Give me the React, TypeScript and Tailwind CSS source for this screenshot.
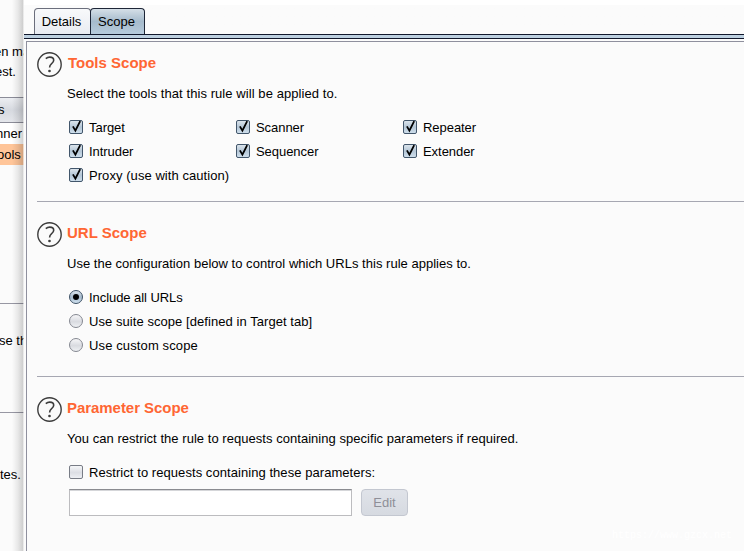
import { ReactNode } from 'react';

const TOOLS = [
  ['Target', 'Scanner', 'Repeater'],
  ['Intruder', 'Sequencer', 'Extender'],
];

function HelpIcon() {
  return (
    <svg viewBox="0 0 26 26" className="h-[26px] w-[26px] shrink-0" fill="none">
      <circle cx="12.5" cy="12.5" r="11.7" stroke="#3c3c3c" strokeWidth="1.4" />
      <path
        d="M8.8 6.700C9.900 5.700 11.300 5.100 12.800 5.100c2.400 0 3.900 1.200 3.900 3.200 0 1.800-1.100 2.700-2.300 3.600-1.200.9-1.800 1.700-1.800 3.700"
        stroke="#3c3c3c"
        strokeWidth="1.600"
      />
      <circle cx="12.5" cy="19" r="1.350" fill="#3c3c3c" />
    </svg>
  );
}

function CheckBox({ checked = false }: { checked?: boolean }) {
  return (
    <svg viewBox="0 0 16 16" className="mb-0.5 h-4 w-4 shrink-0">
      <defs>
        <linearGradient id="boxOn" x1="0" y1="0" x2="0" y2="1">
          <stop offset="0" stopColor="#dfe7ee" />
          <stop offset="0.5" stopColor="#b4c6d6" />
          <stop offset="1" stopColor="#d0e0ed" />
        </linearGradient>
        <linearGradient id="boxOff" x1="0" y1="0" x2="0" y2="1">
          <stop offset="0" stopColor="#f7f8fa" />
          <stop offset="0.55" stopColor="#dcdee4" />
          <stop offset="1" stopColor="#eff1f5" />
        </linearGradient>
      </defs>
      <rect
        x="1.5"
        y="1.5"
        width="13"
        height="13"
        rx="1.5"
        fill={checked ? 'url(#boxOn)' : 'url(#boxOff)'}
        stroke={checked ? '#42566b' : '#787c86'}
      />
      {checked && <path d="M4.9 7.400l2.500 4.200 4.800-9.500" stroke="#000" strokeWidth="1.800" fill="none" />}
    </svg>
  );
}

function RadioButton({ checked = false }: { checked?: boolean }) {
  return (
    <svg viewBox="0 0 16 16" className="mb-0.5 h-4 w-4 shrink-0">
      <defs>
        <linearGradient id="radioOn" x1="0" y1="0" x2="0" y2="1">
          <stop offset="0" stopColor="#e1e9f0" />
          <stop offset="0.5" stopColor="#a5b9cb" />
          <stop offset="1" stopColor="#d3e5f3" />
        </linearGradient>
        <linearGradient id="radioOff" x1="0" y1="0" x2="0" y2="1">
          <stop offset="0" stopColor="#f8f8fa" />
          <stop offset="0.55" stopColor="#d9dbe0" />
          <stop offset="1" stopColor="#f1f3f6" />
        </linearGradient>
      </defs>
      <circle
        cx="8"
        cy="8"
        r="6.5"
        fill={checked ? 'url(#radioOn)' : 'url(#radioOff)'}
        stroke={checked ? '#3f5266' : '#858891'}
      />
      {checked && <circle cx="8" cy="8" r="3" fill="#000" />}
    </svg>
  );
}

interface OptionProps {
  control: ReactNode;
  label: string;
  className?: string;
}

function Option({ control, label, className = '' }: OptionProps) {
  return (
    <label className="flex h-6 items-center gap-[5px]">
      {control}
      <span className={className}>{label}</span>
    </label>
  );
}

interface SectionProps {
  title: string;
  text: string;
  titleClass?: string;
  textClass?: string;
  children: ReactNode;
}

function Section({ title, text, titleClass = '', textClass = '', children }: SectionProps) {
  return (
    <section className="flex">
      <HelpIcon />
      <div className="ml-1 flex flex-col">
        <h2 className={`h-[22px] text-[15px] font-bold leading-[22px] text-[#ff6633] ${titleClass}`}>{title}</h2>
        <p className={`mt-2.5 h-5 leading-5 ${textClass}`}>{text}</p>
        <div className="mt-3 ml-px">{children}</div>
      </div>
    </section>
  );
}

// Strip of the parent window that stays visible behind the dialog
function BackgroundWindow() {
  return (
    <aside className="relative flex w-6 shrink-0 flex-col overflow-hidden whitespace-nowrap bg-[#fbfbfb]">
      <p className="mt-[42px] -ml-[6px] h-5 leading-5">en match</p>
      <p className="-ml-[5px] h-5 leading-5">est.</p>
      <div className="mt-[15px] flex h-[26px] items-center border-y border-[#8b8c98] bg-linear-to-b from-[#eceef2] via-[#d6d9df] to-[#e4e6eb]">
        <span className="-ml-[2px]">s</span>
      </div>
      <div className="h-[21px] bg-white leading-[21px]">
        <span className="-ml-[4px]">nner</span>
      </div>
      <div className="h-[21px] bg-[#ffc599] leading-[21px]">
        <span className="-ml-[3px]">ools</span>
      </div>
      <div className="mt-[138px] h-px shrink-0 bg-[#9797a3]" />
      <p className="mt-[27px] -ml-px h-5 leading-5">se this</p>
      <div className="mt-[61px] h-px shrink-0 bg-[#9797a3]" />
      <p className="mt-[52px] h-5 leading-5">tes.</p>
      <div className="absolute inset-y-0 right-0 w-3 bg-linear-to-r from-black/0 via-black/8 to-black/20" />
      <div className="absolute inset-y-0 right-0 w-px bg-white/60" />
    </aside>
  );
}

export default function App() {
  return (
    <div className="flex h-[551px] w-[744px] overflow-hidden bg-white font-['Liberation_Sans',Arial,sans-serif] text-[13px] text-black">
      <BackgroundWindow />
      <main className="flex grow flex-col bg-[#fbfbfb]">
        <div className="flex h-[34px] items-end bg-linear-to-b from-white from-15% to-[#fbfbfb] to-15% pl-2.5">
          <div className="flex h-[26px] w-[57px] items-center justify-center rounded-t-[4px] border border-b-0 border-[#6b6e7c] bg-linear-to-b from-[#f8f9fb] to-[#e9ecf2] pr-0.5">
            Details
          </div>
          <div className="-ml-px flex h-[26px] w-[55px] items-center justify-center rounded-t-[4px] border border-b-0 border-[#1d2536] bg-linear-to-b from-[#d5dfe7] via-[#a6bbcc] to-[#b7cbdc] pr-0.5">
            Scope
          </div>
        </div>
        <div className="h-[5px] border-y border-[#11182c] bg-[#bdd0e0]" />
        <div className="mt-0.5 ml-0.5 flex grow flex-col border-t border-l border-[#8f909e] pt-2.5 pl-2.5">
          <Section
            title="Tools Scope"
            text="Select the tools that this rule will be applied to."
            titleClass="pl-px"
            textClass="tracking-[0.075px]"
          >
            {TOOLS.map((row) => (
              <div key={row[0]} className="grid grid-cols-[167px_167px_120px]">
                {row.map((tool) => (
                  <Option key={tool} control={<CheckBox checked />} label={tool} className="tracking-[-0.05px]" />
                ))}
              </div>
            ))}
            <Option
              control={<CheckBox checked />}
              label="Proxy (use with caution)"
              className="tracking-[0.06px]"
            />
          </Section>
          <div className="mt-[13px] h-px bg-[#a6a7b2]" />
          <div className="mt-5">
            <Section
              title="URL Scope"
              text="Use the configuration below to control which URLs this rule applies to."
              textClass="tracking-[0.02px]"
            >
              <Option control={<RadioButton checked />} label="Include all URLs" className="tracking-[-0.06px]" />
              <Option
                control={<RadioButton />}
                label="Use suite scope [defined in Target tab]"
                className="tracking-[0.06px]"
              />
              <Option control={<RadioButton />} label="Use custom scope" className="tracking-[0.12px]" />
            </Section>
          </div>
          <div className="mt-[18px] h-px bg-[#a6a7b2]" />
          <div className="mt-5">
            <Section
              title="Parameter Scope"
              text="You can restrict the rule to requests containing specific parameters if required."
              titleClass="tracking-[-0.05px]"
              textClass="tracking-[0.04px]"
            >
              <Option
                control={<CheckBox />}
                label="Restrict to requests containing these parameters:"
                className="tracking-[0.06px]"
              />
              <div className="mt-1 ml-px flex items-center gap-[9px]">
                <input className="h-[27px] w-[283px] border border-[#bcbcbf] border-t-[#8a8b90] bg-white shadow-[inset_0_1px_0_#d5d6d9] outline-none" />
                <button className="h-[27px] w-[47px] rounded-[4px] border border-[#c3c7d0] bg-linear-to-b from-[#e0e3e9] to-[#d6dae1] text-[#8e8f98]">
                  Edit
                </button>
              </div>
            </Section>
          </div>
          <div className="mt-auto self-end pr-3 pb-2 font-['Liberation_Mono',monospace] text-[10px] text-white">
            https://www.gzcx.net
          </div>
        </div>
      </main>
    </div>
  );
}
